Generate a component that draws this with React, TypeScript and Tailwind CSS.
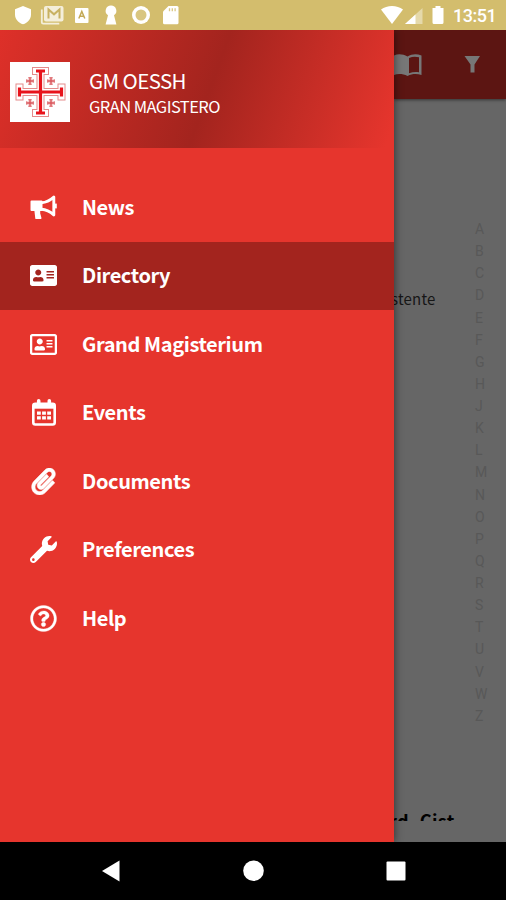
import type { ReactNode } from "react";
import {
  FaAddressCard,
  FaPaperclip,
  FaRegAddressCard,
  FaRegQuestionCircle,
  FaWrench,
} from "react-icons/fa";

const letters = "ABCDEFGHJKLMNOPQRSTUVWZ".split("");

function Megaphone() {
  return (
    <svg width="27" height="27" viewBox="0 0 27 27" fill="none" stroke="currentColor" strokeLinejoin="round">
      <path d="M1.500 7.500h10v8.500h-10z" fill="currentColor" strokeWidth="2" />
      <path d="M5 16h4.500v3.500l1.300 4.800H6z" fill="currentColor" strokeWidth="1.400" />
      <path d="M11.500 8.700C16 8.500 20 6.500 23.800 3v18C20 17.500 16 15.500 11.500 15.300" strokeWidth="2.900" />
      <path d="M25.800 9.600v4.800" strokeWidth="2" />
    </svg>
  );
}

function Calendar() {
  return (
    <svg width="24" height="27" viewBox="0 0 24 27" fill="none">
      <path d="M6.700 1.800v4M17.300 1.800v4" stroke="currentColor" strokeWidth="3.600" strokeLinecap="round" />
      <rect x="1.300" y="4.700" width="21.400" height="20.800" rx="2" stroke="currentColor" strokeWidth="2.600" />
      <path d="M1.300 4.700h21.400v5H1.300z" fill="currentColor" />
      <path
        d="M5 12.500h3.800v3.300H5zM10.100 12.500h3.800v3.300h-3.800zM15.200 12.500H19v3.300h-3.800zM5 17.200h3.800v3.300H5zM10.100 17.200h3.800v3.300h-3.800zM15.200 17.200H19v3.300h-3.800z"
        fill="currentColor"
      />
    </svg>
  );
}

const menu: { label: string; icon: ReactNode; active?: boolean }[] = [
  { label: "News", icon: <Megaphone /> },
  { label: "Directory", icon: <FaAddressCard size={27} />, active: true },
  { label: "Grand Magisterium", icon: <FaRegAddressCard size={27} /> },
  { label: "Events", icon: <Calendar /> },
  { label: "Documents", icon: <FaPaperclip size={27} stroke="currentColor" strokeWidth={10} /> },
  { label: "Preferences", icon: <FaWrench size={27} /> },
  { label: "Help", icon: <FaRegQuestionCircle size={27} stroke="currentColor" strokeWidth={6} /> },
];

function StatusBar() {
  return (
    <div className="flex h-[30px] shrink-0 items-center bg-[#d3bd6d] text-white">
      <svg width="190" height="30" viewBox="0 0 190 30" fill="currentColor">
        <path d="M23 6l8 3.2v5.2c0 4.600-3.300 8.300-8 9.800-4.700-1.500-8-5.200-8-9.800V9.200z" />
        <path d="M41.800 9.500v12.700q0 1.500 1.500 1.500h16" fill="none" stroke="currentColor" strokeWidth="1.800" opacity=".75" />
        <rect x="44" y="6" width="19.500" height="15.500" rx="2" opacity=".75" />
        <path d="M48.500 18.500V9.500l5.500 4.800 5.500-4.800v9" fill="none" stroke="#c8b162" strokeWidth="2" />
        <rect x="75" y="8" width="13.500" height="15" rx="1" />
        <path d="M78.800 18.500l3-7 3 7M79.800 16.200h4" fill="none" stroke="#c3a956" strokeWidth="1.500" />
        <path d="M111 5.500a5.300 5.300 0 0 1 3 9.700l2.400 9.300h-10.800l2.400-9.300a5.300 5.300 0 0 1 3-9.700z" />
        <circle cx="141" cy="15" r="9" />
        <circle cx="141" cy="15" r="5.500" fill="#d9c680" />
        <path d="M168.500 6h8.500q1.500 0 1.500 1.500v15.300q0 1.500-1.500 1.500h-12.500q-1.500 0-1.500-1.500V11.500z" />
        <path d="M169.500 8.300v3m2.800-3v3m2.800-3v3" stroke="#d9c785" strokeWidth="1.300" />
      </svg>
      <svg className="ml-auto" width="66" height="30" viewBox="380 0 66 30" fill="currentColor">
        <path d="M381 9.500c6-4.700 16-4.700 22 0L392 24z" />
        <path d="M422.500 8v16H405z" opacity=".42" />
        <path d="M415.500 14.400V24H405z" />
        <path d="M435.500 6h5v2h3v14.500q0 1.500-1.500 1.500h-8q-1.500 0-1.500-1.500V8h3z" />
      </svg>
      <span className="ml-[7px] w-[53px] whitespace-nowrap pt-px font-[Roboto,sans-serif] text-[18px] font-medium leading-[30px] tracking-[-0.5px]">
        13:51
      </span>
    </div>
  );
}

function JerusalemCross() {
  const small = [
    [20, 19],
    [41, 19],
    [20, 41],
    [41, 41],
  ];
  const cross = "M30.500 9V51M9.500 30H51.500M26 9h9M26 51h9M9.500 25.500v9M51.500 25.500v9";
  return (
    <svg className="shrink-0 bg-white" width="60" height="60" viewBox="0 0 60 60" fill="none">
      <path d={cross} stroke="#e58b8b" strokeWidth="8" strokeLinecap="square" />
      <path d={cross} stroke="#fff" strokeWidth="6" strokeLinecap="square" />
      <path d={cross} stroke="#e8141c" strokeWidth="3.200" strokeLinecap="butt" />
      {small.map(([x, y]) => (
        <g key={`${x}-${y}`} transform={`translate(${x} ${y})`}>
          <path d="M0-4V4M-4 0H4" stroke="#f6d0d0" strokeWidth="4" />
          <path d="M0-4V4M-4 0H4" stroke="#d9555b" strokeWidth="1.400" />
          <path d="M-1.500-3.500h3M-1.500 3.500h3M-3.500-1.500v3M3.500-1.500v3" stroke="#e07a7e" strokeWidth="1" />
        </g>
      ))}
    </svg>
  );
}

function Drawer() {
  return (
    <aside className="z-10 flex w-[394px] shrink-0 flex-col bg-[#e6352d] text-white shadow-[1px_0_8px_rgba(0,0,0,0.45)]">
      <header className="flex h-[118px] shrink-0 items-center bg-[linear-gradient(110deg,#de3029_0%,#a3241e_53%,#e6352d_98%)] pl-[10px] pt-[5px]">
        <JerusalemCross />
        <div className="ml-[19px] flex flex-col whitespace-nowrap pt-[4px]">
          <span className="text-[20.5px] leading-[25px] tracking-[-0.6px]">GM OESSH</span>
          <span className="text-[16.5px] leading-[26px] tracking-[-0.55px]">GRAN MAGISTERO</span>
        </div>
      </header>
      <nav className="mt-[25px] flex flex-col">
        {menu.map((item) => (
          <a
            key={item.label}
            className={
              item.active
                ? "flex h-[68.500px] items-center bg-[#a3241e] pl-[30px]"
                : "flex h-[68.500px] items-center pl-[30px]"
            }
          >
            <span className="flex w-[27px] justify-center">{item.icon}</span>
            <span className="ml-[25px] whitespace-nowrap pb-px text-[20px] font-bold leading-[30px] tracking-[-0.4px]">
              {item.label}
            </span>
          </a>
        ))}
      </nav>
    </aside>
  );
}

function DirectoryPage() {
  return (
    <main className="flex min-w-0 flex-1 flex-col bg-[#666]">
      <div className="flex h-[69px] shrink-0 items-center bg-[#5c1512] text-[#777] shadow-[0_1px_3px_rgba(0,0,0,0.5)]">
        <svg width="112" height="69" viewBox="394 30 112 69" fill="currentColor">
          <path d="M394 55.500c4-1.800 9-1.500 13.500 1 4.500-2.500 9-2.800 14-1v19.500c-5-1.500-9.500-1.200-14 1-4.500-2.200-9.500-2.500-13.500-1z" />
          <path d="M409 58c3.500-1.500 6.500-1.500 10-.7v15c-3.500-.7-6.500-.3-10 1z" fill="#5c1512" />
          <path d="M464.500 56h15.500l-5.500 8.500v8h-4v-8z" />
        </svg>
      </div>
      <div className="flex h-[722px] justify-between overflow-hidden">
        <div className="flex flex-col pt-[188px] text-black">
          <span className="-ml-[3px] whitespace-nowrap text-[15px] leading-[24px] tracking-[0.2px] text-[#161616]">stente</span>
          <span className="-ml-[5px] mt-[496px] whitespace-nowrap text-[18px] font-bold leading-[26px] tracking-[0.4px]">rd. Cist.</span>
        </div>
        <div className="flex w-[31px] shrink-0 flex-col pt-[119px] font-[Roboto,sans-serif] text-[14px] text-[#585858]">
          {letters.map((l) => (
            <span key={l} className="h-[22.140px] leading-[22px]">
              {l}
            </span>
          ))}
        </div>
      </div>
    </main>
  );
}

export default function App() {
  return (
    <div className="flex h-[900px] w-[506px] flex-col overflow-hidden bg-black font-['Noto_Sans_CJK_SC',sans-serif]">
      <StatusBar />
      <div className="flex h-[812px] shrink-0 overflow-hidden">
        <Drawer />
        <DirectoryPage />
      </div>
      <div className="flex h-[58px] shrink-0 items-center bg-black">
        <svg width="506" height="58" viewBox="0 842 506 58" fill="#fff">
          <path d="M102 871l17.500-10.500v21z" />
          <circle cx="253.500" cy="870.800" r="10.300" />
          <rect x="386.500" y="861.500" width="19" height="19" rx="1" />
        </svg>
      </div>
    </div>
  );
}
